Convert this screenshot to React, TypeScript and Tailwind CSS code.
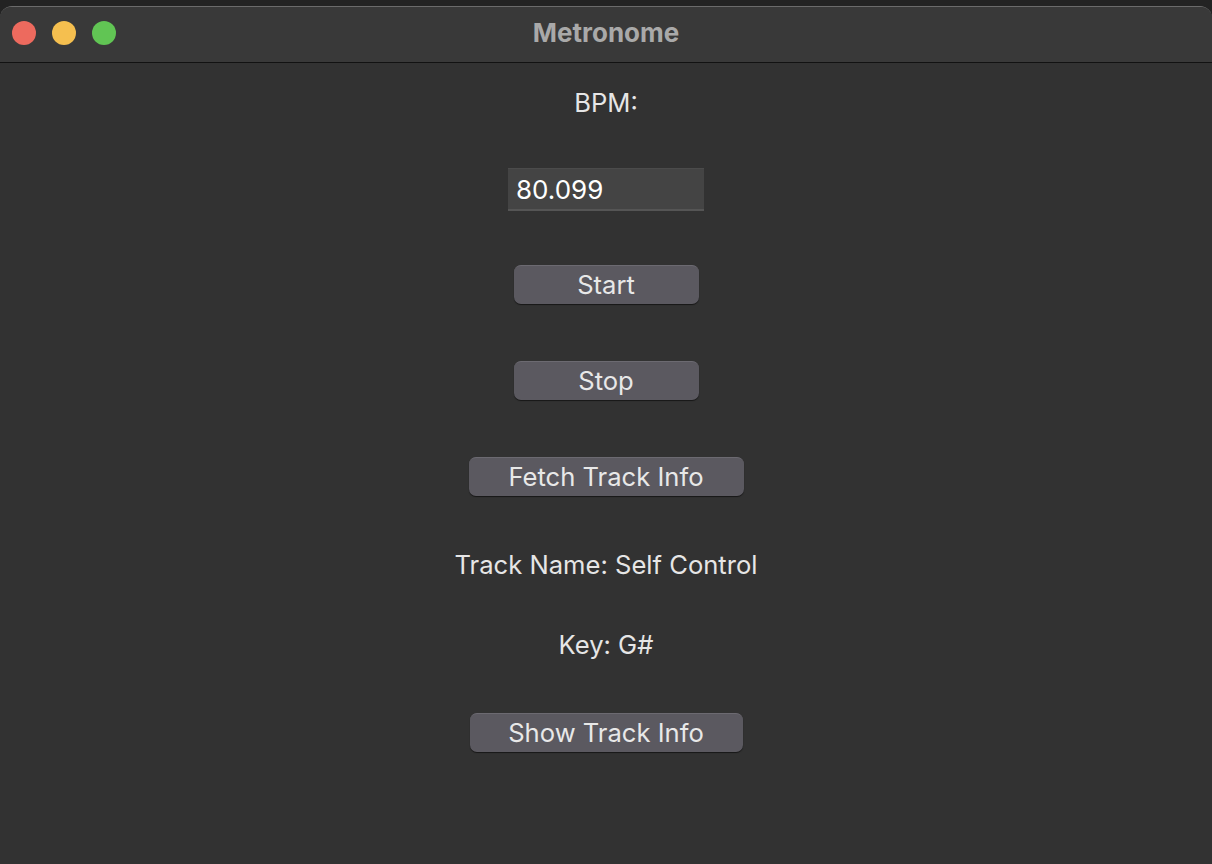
import React from "react";

const font = { fontFamily: '"Inter", "Liberation Sans", Arial, sans-serif' };

function Btn({ label, w }: { label: string; w: string }) {
  return (
    <button
      className={`${w} h-[39px] rounded-[7px] bg-[#5b5960] border-t border-[#6c6a71] shadow-[0_1px_1px_rgba(0,0,0,0.55)] text-[#e8e8e8] text-[25.6px] leading-[36px] flex items-center justify-center`}
      style={font}
    >
      {label}
    </button>
  );
}

export default function App() {
  return (
    <div className="w-[1212px] h-[864px] bg-[#232323] pt-[6px] overflow-hidden">
      <div className="w-full h-[858px] rounded-t-[12px] bg-[#323232] border-t border-[#6b6b6b] flex flex-col overflow-hidden">
        <div className="h-[56px] bg-[#393939] border-b-[1.5px] border-[#121212] relative flex items-center justify-center pb-[4px]">
          <div className="absolute left-[12px] top-[14px] flex gap-[16px]">
            <div className="w-[24px] h-[24px] rounded-full bg-[#ed6a5e]" />
            <div className="w-[24px] h-[24px] rounded-full bg-[#f5bf4f]" />
            <div className="w-[24px] h-[24px] rounded-full bg-[#61c554]" />
          </div>
          <span
            className="text-[#a9a9a9] font-bold text-[26px] leading-[30px]"
            style={font}
          >
            Metronome
          </span>
        </div>
        <div className="flex flex-col items-center text-[#e6e6e6]" style={font}>
          <div className="mt-[24px] h-[32px] text-[25.6px] leading-[32px]">BPM:</div>
          <div className="mt-[49px] w-[196px] h-[43px] bg-[#444444] border-t border-[#4b4b4b] border-b-[2px] border-b-[#555555] flex items-center pl-[8px] text-white text-[26px]">
            80.099
          </div>
          <div className="mt-[54px]">
            <Btn label="Start" w="w-[185px]" />
          </div>
          <div className="mt-[57px]">
            <Btn label="Stop" w="w-[185px]" />
          </div>
          <div className="mt-[57px]">
            <Btn label="Fetch Track Info" w="w-[275px]" />
          </div>
          <div className="mt-[53px] h-[32px] text-[25.6px] leading-[32px]">Track Name: Self Control</div>
          <div className="mt-[48px] h-[32px] text-[25.6px] leading-[32px]">Key: G#</div>
          <div className="mt-[52px]">
            <Btn label="Show Track Info" w="w-[273px]" />
          </div>
        </div>
      </div>
    </div>
  );
}
